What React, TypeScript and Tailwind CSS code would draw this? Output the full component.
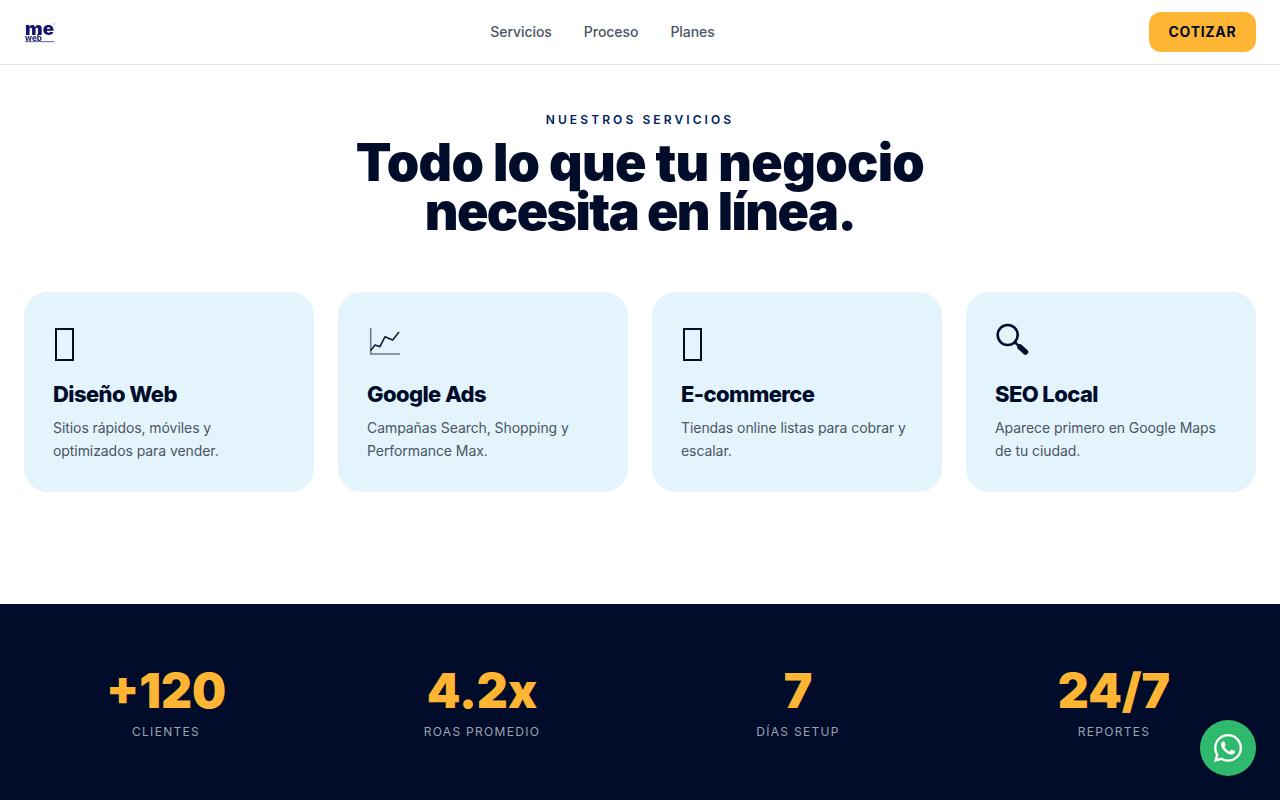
import React from "react";
import { FaWhatsapp } from "react-icons/fa";

const Tofu = () => <div className="ml-[2px] h-[33px] w-[19px] border-2 border-[#000c29]" />;

const Chart = () => (
  <svg width="36" height="38" viewBox="0 0 36 38" className="overflow-visible">
    <path d="M3.7 0V26M3 26H33" fill="none" stroke="#6b7a8f" strokeWidth="1.6" />
    <path d="M3.7 22.5L8 17L13 18.7L18 8.7L25.7 12L32 4" fill="none" stroke="#0a1a35" strokeWidth="1.5" strokeLinejoin="round" />
  </svg>
);

const Lens = () => (
  <svg width="36" height="38" viewBox="0 0 36 38" className="overflow-visible">
    <circle cx="12.7" cy="7" r="10" fill="none" stroke="#000c29" strokeWidth="2.6" />
    <path d="M20 14.5L25 19" stroke="#000c29" strokeWidth="2.4" />
    <path d="M25 19L30.5 24" stroke="#000c29" strokeWidth="5.5" strokeLinecap="round" />
  </svg>
);

const cards = [
  { icon: <Tofu />, title: "Diseño Web", text: ["Sitios rápidos, móviles y", "optimizados para vender."] },
  { icon: <Chart />, title: "Google Ads", text: ["Campañas Search, Shopping y", "Performance Max."] },
  { icon: <Tofu />, title: "E-commerce", text: ["Tiendas online listas para cobrar y", "escalar."] },
  { icon: <Lens />, title: "SEO Local", text: ["Aparece primero en Google Maps", "de tu ciudad."] },
];

const stats = [
  { value: "+120", label: "CLIENTES" },
  { value: "4.2x", label: "ROAS PROMEDIO" },
  { value: "7", label: "DÍAS SETUP" },
  { value: "24/7", label: "REPORTES" },
];

export default function App() {
  return (
    <div className="h-[800px] overflow-hidden bg-white font-['Inter',sans-serif]">
      <header className="flex h-[65px] items-center justify-between border-b border-[#e2e8f0] bg-white px-6">
        <div className="w-[32px] blur-[0.3px]">
          <svg width="32" height="20" viewBox="0 0 32 20" className="ml-px mt-[3px] overflow-visible">
            <text x="0" y="11" fontFamily="Inter" fontWeight="900" fontSize="17" fill="#14146e" textLength="29" lengthAdjust="spacingAndGlyphs">me</text>
            <text x="0" y="16.5" fontFamily="Inter" fontWeight="700" fontSize="9" fill="#14146e" textLength="17" lengthAdjust="spacingAndGlyphs">web</text>
            <rect x="0" y="17" width="29" height="1.2" fill="#7b7baa" />
            <circle cx="29" cy="0" r="1" fill="none" stroke="#a0a0c0" strokeWidth="0.5" />
          </svg>
        </div>
        <nav className="flex items-center gap-8 text-sm font-medium tracking-[-0.05px] text-[#4b5563]">
          <a>Servicios</a>
          <a>Proceso</a>
          <a>Planes</a>
        </nav>
        <button className="h-10 w-[107px] rounded-xl bg-[#ffb534] text-sm font-bold tracking-[0.7px] text-[#000c29]">COTIZAR</button>
      </header>

      <section className="h-[539px] px-6 pt-[47px]">
        <p className="text-center text-xs font-semibold leading-[16px] tracking-[3.1px] text-[#002060]">NUESTROS SERVICIOS</p>
        <h2 className="mt-[10px] text-center text-[52px] font-black leading-[49px] tracking-[-0.7px] text-[#000c29]">
          Todo lo que tu negocio
          <br />
          <span className="tracking-[-1.6px]">necesita en línea.</span>
        </h2>
        <div className="mt-[56px] grid grid-cols-4 gap-6">
          {cards.map((c) => (
            <div key={c.title} className="h-[200px] rounded-3xl bg-[#e3f4fd] p-[29px] pt-[36px]">
              <div className="flex h-[38px]">{c.icon}</div>
              <h3 className="mt-[8px] text-[22px] font-extrabold leading-[40px] tracking-[-0.6px] text-[#000c29]">{c.title}</h3>
              <p className="mt-[2px] text-sm leading-[23px] tracking-[-0.07px] text-[#4b5563]">
                {c.text[0]}
                <br />
                {c.text[1]}
              </p>
            </div>
          ))}
        </div>
      </section>

      <section className="grid h-[196px] grid-cols-4 gap-8 bg-[#000c29] px-6 pt-[57px]">
        {stats.map((s) => (
          <div key={s.label} className="text-center">
            <div className="text-[48px] font-black leading-[60px] text-[#ffb534]">{s.value}</div>
            <div className="mt-[3px] text-xs leading-[16px] tracking-[1.3px] text-[#9ca3af]">{s.label}</div>
          </div>
        ))}
      </section>

      <a className="fixed bottom-6 right-6 flex h-14 w-14 items-center justify-center rounded-full bg-[#2fb96c] text-white">
        <FaWhatsapp size={32} />
      </a>
    </div>
  );
}
